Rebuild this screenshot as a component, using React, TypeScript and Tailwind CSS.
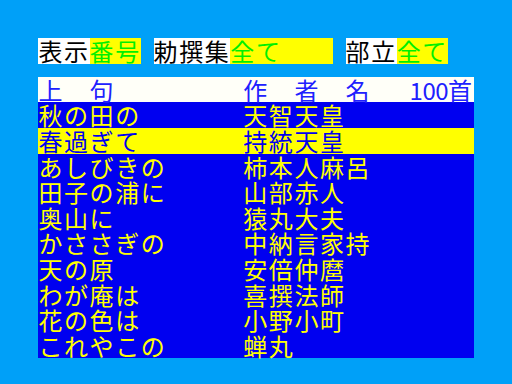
import React from "react";

const rows: [string, string][] = [
  ["秋の田の", "天智天皇"],
  ["春過ぎて", "持統天皇"],
  ["あしびきの", "柿本人麻呂"],
  ["田子の浦に", "山部赤人"],
  ["奥山に", "猿丸大夫"],
  ["かささぎの", "中納言家持"],
  ["天の原", "安倍仲麿"],
  ["わが庵は", "喜撰法師"],
  ["花の色は", "小野小町"],
  ["これやこの", "蝉丸"],
];

const font = { fontFamily: '"Noto Sans CJK JP", "Noto Sans", sans-serif' };

export default function App() {
  return (
    <div
      className="w-[512px] h-[384px] bg-[#00a0f8] pl-[38.4px] pt-[38.4px] overflow-hidden"
      style={font}
    >
      <div className="flex h-[25.6px] text-[24px] leading-[25.6px] tracking-[1.6px]">
        <div className="w-[51.2px] bg-white text-black whitespace-nowrap">表示</div>
        <div className="w-[51.2px] bg-[#ffff00] text-[#00f000] whitespace-nowrap">番号</div>
        <div className="w-[12.8px]" />
        <div className="w-[76.8px] bg-white text-black whitespace-nowrap">勅撰集</div>
        <div className="w-[102.4px] bg-[#ffff00] text-[#00f000] whitespace-nowrap">全て</div>
        <div className="w-[12.8px]" />
        <div className="w-[51.2px] bg-white text-black whitespace-nowrap">部立</div>
        <div className="w-[51.2px] bg-[#ffff00] text-[#00f000] whitespace-nowrap">全て</div>
      </div>
      <div className="mt-[12.8px] w-[435.2px] text-[24px] leading-[25.6px] tracking-[1.6px]">
        <div className="flex h-[25.6px] bg-[#fffff8] text-[#2020ff] whitespace-nowrap">
          <div className="w-[204.8px]">上　句</div>
          <div className="flex-1">作　者　名</div>
          <div className="flex items-baseline tracking-normal">
            <span className="inline-block w-[12.8px] text-center">1</span>
            <span className="inline-block w-[12.8px] text-center">0</span>
            <span className="inline-block w-[12.8px] text-center">0</span>
            <span className="inline-block w-[25.6px]">首</span>
          </div>
        </div>
        {rows.map(([a, b], i) => (
          <div
            key={i}
            className={
              i === 1
                ? "flex h-[25.6px] bg-[#ffff00] text-[#0000f0] whitespace-nowrap"
                : "flex h-[25.6px] bg-[#0000f0] text-[#ffff00] whitespace-nowrap"
            }
          >
            <div className="w-[204.8px]">{a}</div>
            <div className="flex-1">{b}</div>
          </div>
        ))}
      </div>
    </div>
  );
}
